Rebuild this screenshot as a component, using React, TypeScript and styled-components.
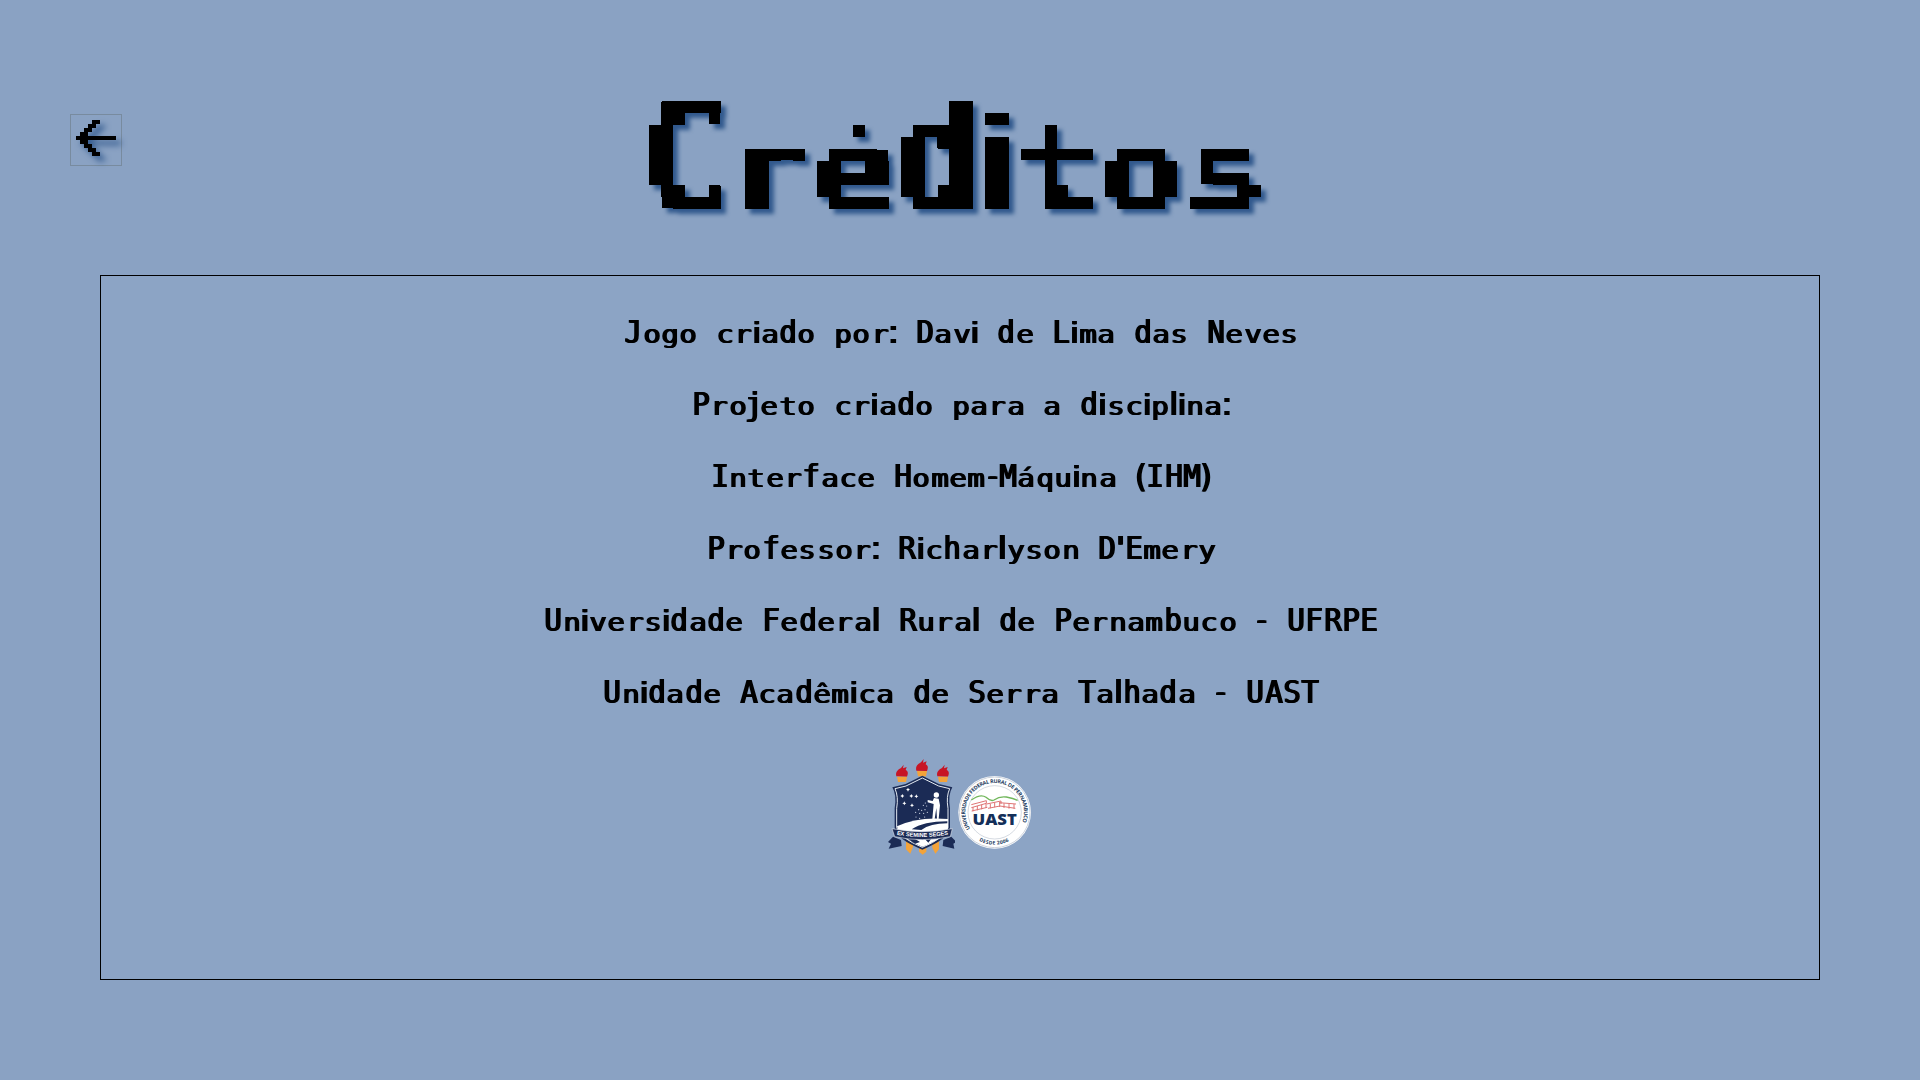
import React from "react";
import styled, { createGlobalStyle } from "styled-components";

const GlobalStyle = createGlobalStyle`
  * { box-sizing: border-box; }
  body { margin: 0; background: #8aa2c3; }
`;

const mono = `"DejaVu Sans Mono", "Liberation Mono", monospace`;

const Screen = styled.main`
  width: 100%;
  height: 1080px;
  padding: 90px 100px 100px;
  display: flex;
  flex-direction: column;
  overflow: hidden;
  color: #000;
  background: #8aa2c3;
`;

const Header = styled.header`
  height: 185px;
  display: grid;
  grid-template-columns: 52px 1fr 52px;
  margin-left: -30px;
  margin-right: -30px;
`;

const BackButton = styled.button`
  width: 52px;
  height: 52px;
  margin-top: 24px;
  padding: 0 0 4px;
  display: flex;
  align-items: center;
  justify-content: center;
  border: 1px solid #788b9f;
  background: transparent;
  svg { overflow: visible; filter: drop-shadow(5px 5px 3px #31598d); }
`;

const Title = styled.h1`
  margin: 0;
  width: 648px;
  height: 144px;
  padding: 0 0 0 7px;
  justify-self: center;
  display: flex;
  align-items: flex-start;
  font: 400 148px/148px ${mono};
  white-space: pre;
  text-shadow: 0.035em 0 #000, -0.035em 0 #000;
  filter: url(#blocks) drop-shadow(5px 5px 2px #31598d);
  & > span { margin-top: -8px; }
`;

const Panel = styled.section`
  height: 705px;
  padding-top: 20px;
  border: 1px solid #000;
  background: #8ca4c5;
  display: flex;
  flex-direction: column;
  align-items: center;
`;

const Line = styled.p`
  margin: 0;
  height: 72px;
  padding-left: 3px;
  font: 400 32.3px/72px ${mono};
  text-shadow: 0.032em 0 #000, -0.032em 0 #000;
  white-space: pre;
`;

const Cell = styled.span<{ $w: number; $x: number; $y: number; $thin: boolean }>`
  display: inline-flex;
  justify-content: center;
  width: ${(p) => p.$w}em;
  height: 1em;
  line-height: 1em;
  white-space: pre;
  font-family: ${(p) => (p.$thin ? `"DejaVu Sans", sans-serif` : mono)};
  transform: scale(${(p) => p.$x}, ${(p) => p.$y});
  transform-origin: 50% 85%;
`;

const Logos = styled.div`
  margin: 22px 0 0;
  display: flex;
  svg { display: block; }
`;

const widths: Record<string, number> = { i: 0.25, l: 0.26, ":": 0.26, "'": 0.25, j: 0.42, "-": 0.42, "(": 0.34, ")": 0.34 };

function Glyphs({ text }: { text: string }) {
  return (
    <>
      {Array.from(text).map((c, i) => {
        const thin = "il:'".includes(c);
        const low = "aceéáêgmnopqrstuvwxyz".includes(c);
        return (
          <Cell key={i} $thin={thin} $w={widths[c] ?? 0.5676} $x={thin ? 1 : 0.9} $y={low ? 0.74 : c === "i" ? 0.87 : 0.98}>
            {c}
          </Cell>
        );
      })}
    </>
  );
}

const lines = [
  "Jogo criado por: Davi de Lima das Neves",
  "Projeto criado para a disciplina:",
  "Interface Homem-Máquina (IHM)",
  "Professor: Richarlyson D'Emery",
  "Universidade Federal Rural de Pernambuco - UFRPE",
  "Unidade Acadêmica de Serra Talhada - UAST",
];

function Arrow() {
  return (
    <svg width="40" height="36" viewBox="0 0 40 36" shapeRendering="crispEdges">
      <path d="M16 0h8v4h-4v4h-4v4h-4v4h28v4H12v4h4v4h4v4h4v4h-8v-4h-4v-4H8v-4H4v-4H0v-4h4v-4h4V8h4V4h4z" />
    </svg>
  );
}

function Torch({ x, y }: { x: number; y: number }) {
  return (
    <g transform={`translate(${x} ${y})`}>
      <path d="M-17 33C-21 17-9 12-3 8L5-2 3 9 14 5 11 14C20 18 18 27 15 34z" fill="#c71525" />
      <path d="M-15 34h30l-3 16h-24z" fill="#f3a33a" />
    </g>
  );
}

function Crest() {
  const stars = [[84, 119], [67, 138], [94, 138], [109, 139], [73, 160], [96, 166]];
  const seeds = [[136, 159], [130, 166], [140, 168], [116, 179], [125, 181], [135, 179], [107, 187], [119, 190], [131, 190], [142, 187], [108, 201], [119, 205], [134, 201]];
  return (
    <svg width="75" height="112" viewBox="0 0 225 336">
      <Torch x={66} y={46} />
      <Torch x={126} y={29} />
      <Torch x={189} y={46} />
      <path d="M78 270h21v20l-8 21-13-13zM117 285h22v20l-11 9-11-9zM157 270h20v28l-11 13-9-18z" fill="#f3a33a" />
      <path d="M127 77L177 102 217 112Q203 135 210 175V235Q203 269 127 299Q51 269 44 235V175Q51 135 37 112L77 102z" fill="#1b2b55" />
      <path d="M127 84L176 108 209 116Q198 140 204 175V233Q195 264 127 292Q59 264 50 233V175Q56 140 45 116L78 108z" fill="#1b2b55" stroke="#e4eaf2" strokeWidth="3" />
      <path d="M51 229Q112 199 204 207V233Q195 264 127 290Q63 263 54 240z" fill="#fff" />
      <path d="M95 238Q130 214 202 214V220Q150 220 124 240zM83 266L97 262 120 276 105 281zM132 264L160 258 145 278z" fill="#1b2b55" />
      <circle cx="169" cy="135" r="8" fill="#fff" />
      <path d="M162 144l14 2 4 20-4 41h-5l-2-33-5 33h-7l4-45-18-5v-7l15 3z" fill="#fff" />
      {stars.map(([x, y]) => <path key={`${x}-${y}`} d={`M${x} ${y - 6}l2 4 4 2-4 2-2 4-2-4-4-2 4-2z`} fill="#fff" />)}
      {seeds.map(([x, y]) => <circle key={`${x}-${y}`} cx={x} cy={y} r="1.8" fill="#d8dfeb" />)}
      <path d="M39 260L24 276 33 281 26 296 65 288 63 270zM214 260L229 276 220 281 223 296 188 288 190 270z" fill="#1b2b55" />
      <path d="M36 236Q125 254 217 236L211 260Q126 278 44 260z" fill="#1b2b55" stroke="#d9e0ea" strokeWidth="2" />
      <path id="motto" d="M50 254Q126 269 220 251" fill="none" />
      <text fill="#fff" fontFamily="Liberation Sans, sans-serif" fontWeight="700" fontSize="17">
        <textPath href="#motto">EX SEMINE SEGES</textPath>
      </text>
    </svg>
  );
}

function Seal() {
  return (
    <svg width="85" height="112" viewBox="-15 -45 255 336">
      <circle cx="104" cy="142" r="109" fill="#fff" />
      <circle cx="104" cy="142" r="106" fill="none" stroke="#9aa6b8" strokeWidth="1.5" />
      <circle cx="104" cy="142" r="80" fill="none" stroke="#aab4c3" strokeWidth="1.5" />
      <path id="sealTop" d="M31 191A88 88 0 1 1 177 191" fill="none" />
      <path id="sealBottom" d="M57 227A98 98 0 0 0 151 227" fill="none" />
      <g fill="#233b60" fontFamily="Open Sans, sans-serif" fontWeight="700">
        <text fontSize="16"><textPath href="#sealTop" textLength="358">UNIVERSIDADE FEDERAL RURAL DE PERNAMBUCO</textPath></text>
        <text fontSize="15"><textPath href="#sealBottom" textLength="93">DESDE 2006</textPath></text>
      </g>
      <path d="M34 105Q62 85 78 97Q92 110 102 105Q119 93 139 96Q160 100 173 106" fill="none" stroke="#72b75c" strokeWidth="4" />
      <path d="M34 119L79 107V115L34 128M80 117L123 108V117M117 113L168 117M39 126v13M52 123v13M65 119v14M78 115v14M91 117v13M104 113v14M119 112v14M132 115v14M147 117v14M162 117v14M35 138L82 127M84 130L120 123 166 130" fill="none" stroke="#df7474" strokeWidth="3" />
      <text x="104" y="179" textAnchor="middle" textLength="133" lengthAdjust="spacingAndGlyphs" fill="#142f59" fontFamily="Open Sans, sans-serif" fontWeight="800" fontSize="45">UAST</text>
    </svg>
  );
}

const FilterDefs = styled.svg`
  position: absolute;
`;

function BlockFilter() {
  return (
    <FilterDefs width="0" height="0" aria-hidden="true">
      <filter id="blocks" filterUnits="userSpaceOnUse" x="0" y="0" width="660" height="156" colorInterpolationFilters="sRGB">
        <feFlood x="6" y="4" width="2" height="2" floodColor="#000" result="dot" />
        <feOffset in="dot" x="0" y="0" width="12" height="12" dx="0" dy="0" result="unit" />
        <feTile in="unit" x="0" y="0" width="660" height="156" result="grid" />
        <feComposite in="SourceGraphic" in2="grid" operator="in" />
        <feComponentTransfer><feFuncA type="linear" slope="20" intercept="-10" /></feComponentTransfer>
        <feMorphology operator="dilate" radius="5" />
      </filter>
    </FilterDefs>
  );
}

export default function App() {
  return (
    <Screen>
      <GlobalStyle />
      <BlockFilter />
      <Header>
        <BackButton aria-label="Voltar"><Arrow /></BackButton>
        <Title><Glyphs text="Créditos" /></Title>
      </Header>
      <Panel>
        {lines.map((line) => <Line key={line}><Glyphs text={line} /></Line>)}
        <Logos><Crest /><Seal /></Logos>
      </Panel>
    </Screen>
  );
}
